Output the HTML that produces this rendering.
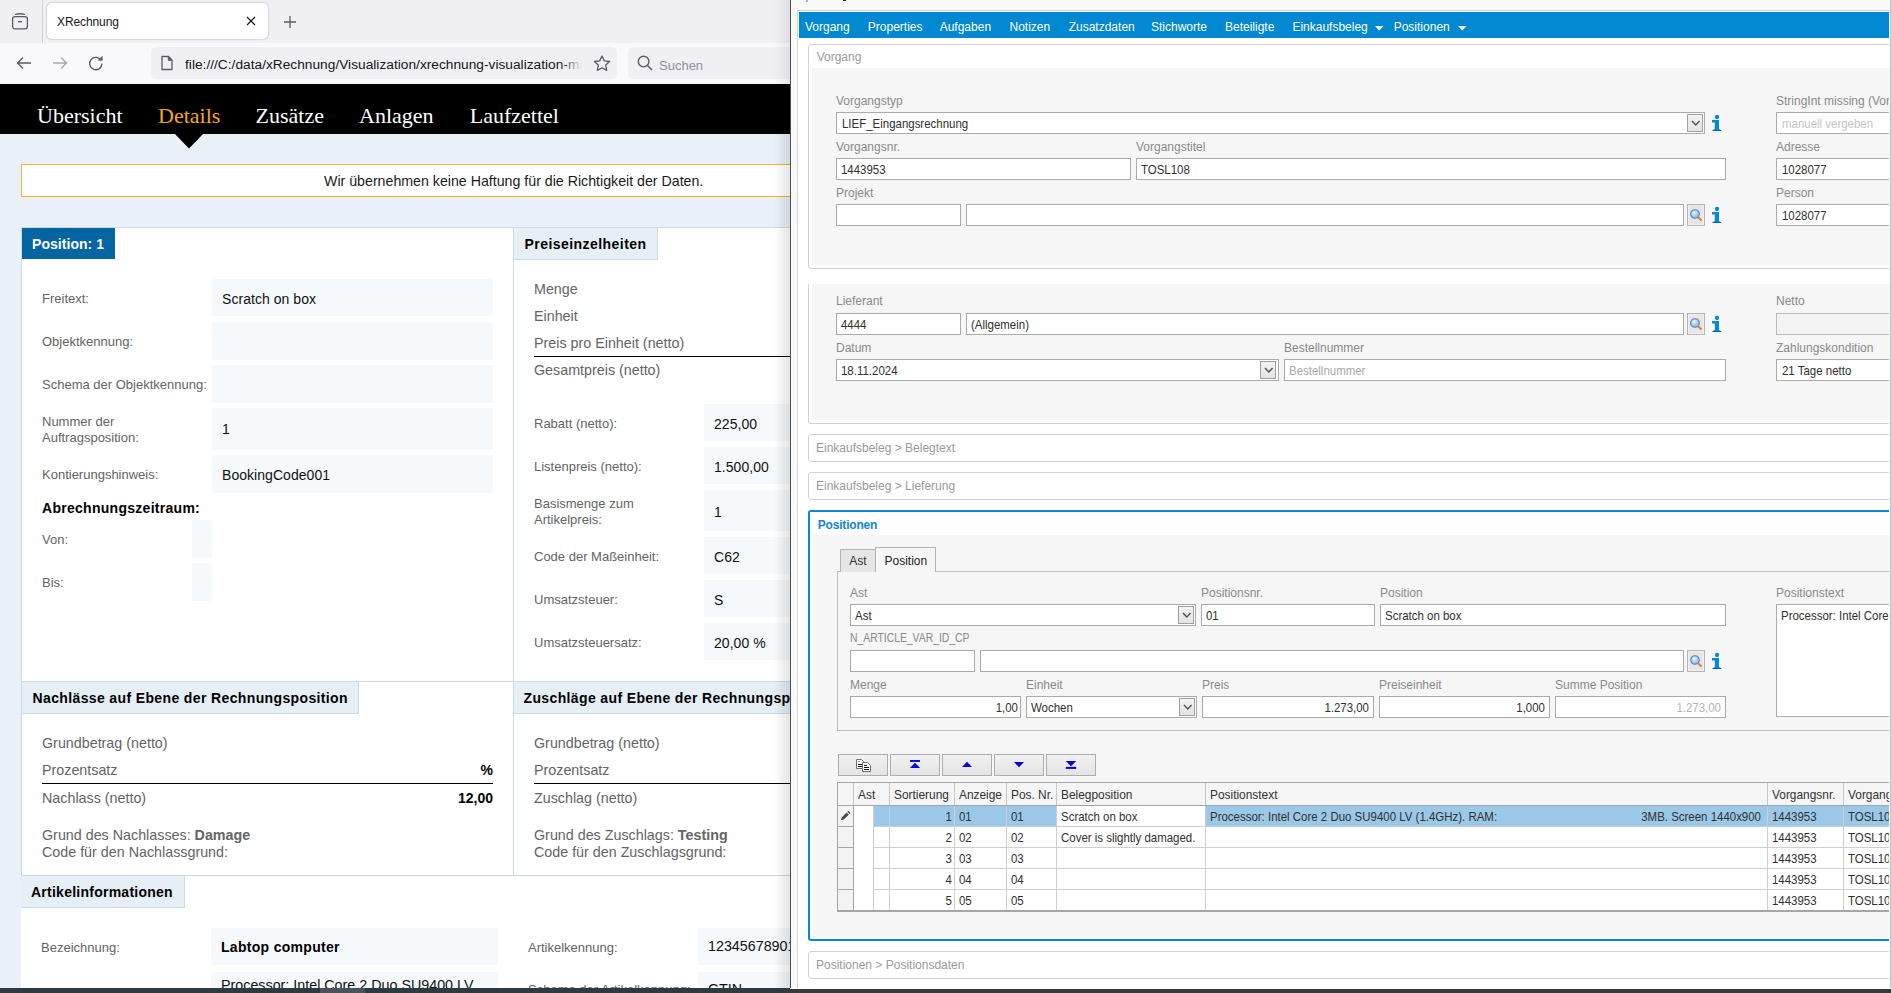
<!DOCTYPE html><html><head><meta charset="utf-8"><style>
html,body{margin:0;padding:0;width:1891px;height:993px;overflow:hidden;background:#fff;font-family:"Liberation Sans",sans-serif}
.a{position:absolute}
.t{white-space:nowrap}
</style></head><body>
<div class="a" style="left:0;top:0;width:790px;height:988px;overflow:hidden">
<div class="a" style="left:0px;top:0px;width:790px;height:43px;background:#f0f0f4"></div>
<div class="a" style="left:42px;top:0px;width:1px;height:43px;background:#cfcfd8"></div>
<div class="a" style="left:47px;top:3px;width:221px;height:36px;background:#fff;border-radius:5px;box-shadow:0 0 2px rgba(0,0,0,.35)"></div>
<div class="a t" style="left:57px;top:14.64px;font-size:12px;line-height:14.4px;color:#15141a;font-family:'Liberation Sans',sans-serif;letter-spacing:-0.1px">XRechnung</div>
<svg class="a" style="left:10px;top:11px" width="20" height="20" viewBox="0 0 20 20"><rect x="2.6" y="5.6" width="14.8" height="12.2" rx="2.5" fill="none" stroke="#5b5b66" stroke-width="1.3"/><path d="M5 3.5 Q10 2 15 3.5" fill="none" stroke="#5b5b66" stroke-width="1.3"/><rect x="8" y="10" width="4" height="1.4" fill="#5b5b66"/></svg>
<svg class="a" style="left:245px;top:15px" width="12" height="12" viewBox="0 0 12 12"><path d="M2 2L10 10M10 2L2 10" stroke="#15141a" stroke-width="1.2"/></svg>
<svg class="a" style="left:283px;top:15px" width="14" height="14" viewBox="0 0 14 14"><path d="M7 1V13M1 7H13" stroke="#5b5b66" stroke-width="1.3"/></svg>
<div class="a" style="left:0px;top:43px;width:790px;height:41px;background:#f9f9fb"></div>
<svg class="a" style="left:15px;top:55px" width="18" height="16" viewBox="0 0 18 16"><path d="M2.5 8H16M8 2.5L2.5 8L8 13.5" fill="none" stroke="#5b5b66" stroke-width="1.4"/></svg>
<svg class="a" style="left:51px;top:55px" width="18" height="16" viewBox="0 0 18 16"><path d="M15.5 8H2M10 2.5L15.5 8L10 13.5" fill="none" stroke="#a5a5ac" stroke-width="1.4"/></svg>
<svg class="a" style="left:87px;top:54px" width="18" height="18" viewBox="0 0 18 18"><path d="M14.2 6.5A6.2 6.2 0 1 0 15 9.5" fill="none" stroke="#5b5b66" stroke-width="1.4"/><path d="M10.5 6.5L15.6 6.5L15.6 1.8Z" fill="#5b5b66"/></svg>
<div class="a" style="left:151px;top:47px;width:466px;height:32px;background:#f0f0f4;border-radius:5px"></div>
<svg class="a" style="left:159px;top:54px" width="16" height="18" viewBox="0 0 16 18"><path d="M3 2.5H9.5L13 6V15.5H3Z" fill="none" stroke="#5b5b66" stroke-width="1.3" stroke-linejoin="round"/><path d="M9.3 2.5V6.3H13" fill="#5b5b66" stroke="#5b5b66" stroke-width="1"/></svg>
<div class="a t" style="left:185px;top:57.03px;font-size:13.7px;line-height:16.44px;color:#15141a;font-family:'Liberation Sans',sans-serif;letter-spacing:0.02px;white-space:nowrap;width:400px;overflow:hidden">file:///C:/data/xRechnung/Visualization/xrechnung-visualization-ma</div>
<div class="a" style="left:560px;top:48px;width:28px;height:30px;background:linear-gradient(90deg,rgba(240,240,244,0),#f0f0f4 80%)"></div>
<svg class="a" style="left:592px;top:54px" width="20" height="19" viewBox="0 0 20 19"><path d="M10 2L12.3 6.9L17.6 7.5L13.7 11.1L14.7 16.4L10 13.8L5.3 16.4L6.3 11.1L2.4 7.5L7.7 6.9Z" fill="none" stroke="#5b5b66" stroke-width="1.3" stroke-linejoin="round"/></svg>
<div class="a" style="left:628px;top:47px;width:170px;height:32px;background:#f0f0f4;border-radius:5px"></div>
<svg class="a" style="left:636px;top:54px" width="18" height="18" viewBox="0 0 18 18"><circle cx="7.6" cy="7.6" r="5.3" fill="none" stroke="#5b5b66" stroke-width="1.4"/><path d="M11.5 11.5L16 16" stroke="#5b5b66" stroke-width="1.5"/></svg>
<div class="a t" style="left:659px;top:57.70px;font-size:13px;line-height:15.6px;color:#8f8f9d;font-family:'Liberation Sans',sans-serif;">Suchen</div>
<div class="a" style="left:0px;top:84px;width:790px;height:50px;background:#000"></div>
<div class="a" style="left:0px;top:134px;width:790px;height:854px;background:#e9f0f7"></div>
<svg class="a" style="left:174px;top:133px" width="30" height="16" viewBox="0 0 30 16"><path d="M0 0H30L15 15.5Z" fill="#000"/></svg>
<div class="a t" style="left:37px;top:103.08px;font-size:22px;line-height:26.4px;color:#fff;font-family:'Liberation Serif',serif;">Übersicht</div>
<div class="a t" style="left:158px;top:103.08px;font-size:22px;line-height:26.4px;color:#f6a81a;font-family:'Liberation Serif',serif;">Details</div>
<div class="a t" style="left:255.5px;top:103.08px;font-size:22px;line-height:26.4px;color:#fff;font-family:'Liberation Serif',serif;">Zusätze</div>
<div class="a t" style="left:359px;top:103.08px;font-size:22px;line-height:26.4px;color:#fff;font-family:'Liberation Serif',serif;">Anlagen</div>
<div class="a t" style="left:469.8px;top:103.08px;font-size:22px;line-height:26.4px;color:#fff;font-family:'Liberation Serif',serif;">Laufzettel</div>
<div class="a" style="left:21px;top:164px;width:1000px;height:31px;background:#fff;border:1px solid #f9b22f"></div>
<div class="a t" style="left:324px;top:172.56px;font-size:14.2px;line-height:17.04px;color:#1a1a1a;font-family:'Liberation Sans',sans-serif;white-space:nowrap">Wir übernehmen keine Haftung für die Richtigkeit der Daten.</div>
<div class="a" style="left:21px;top:227px;width:1000px;height:648px;background:#fff;border-top:1px solid #c8dbea;border-left:1px solid #c8dbea"></div>
<div class="a" style="left:513px;top:227px;width:1px;height:648px;background:#c8dbea"></div>
<div class="a" style="left:21px;top:681px;width:1000px;height:1px;background:#c8dbea"></div>
<div class="a" style="left:21px;top:875px;width:1000px;height:1px;background:#c8dbea"></div>
<div class="a" style="left:21px;top:876px;width:1000px;height:120px;background:#fff"></div>
<div class="a" style="left:22px;top:228px;width:93px;height:31px;background:#0565a2"></div>
<div class="a t" style="left:32px;top:235.75px;font-size:14px;line-height:16.8px;color:#fff;font-family:'Liberation Sans',sans-serif;font-weight:bold;letter-spacing:0.05px">Position: 1</div>
<div class="a" style="left:514px;top:228px;width:143px;height:31px;background:#e6eef6;border-right:1px solid #c8dbea;border-bottom:1px solid #c8dbea"></div>
<div class="a t" style="left:524.5px;top:235.75px;font-size:14px;line-height:16.8px;color:#000;font-family:'Liberation Sans',sans-serif;font-weight:bold;letter-spacing:0.45px">Preiseinzelheiten</div>
<div class="a" style="left:22px;top:682px;width:336px;height:31px;background:#e6eef6;border-right:1px solid #c8dbea;border-bottom:1px solid #c8dbea"></div>
<div class="a t" style="left:32.5px;top:689.75px;font-size:14px;line-height:16.8px;color:#000;font-family:'Liberation Sans',sans-serif;font-weight:bold;letter-spacing:0.37px;white-space:nowrap">Nachlässe auf Ebene der Rechnungsposition</div>
<div class="a" style="left:514px;top:682px;width:400px;height:31px;background:#e6eef6;border-bottom:1px solid #c8dbea"></div>
<div class="a t" style="left:523.5px;top:689.75px;font-size:14px;line-height:16.8px;color:#000;font-family:'Liberation Sans',sans-serif;font-weight:bold;letter-spacing:0.37px;white-space:nowrap">Zuschläge auf Ebene der Rechnungsposition</div>
<div class="a" style="left:21px;top:876px;width:163px;height:31px;background:#e6eef6;border-right:1px solid #c8dbea;border-bottom:1px solid #c8dbea"></div>
<div class="a t" style="left:31px;top:883.75px;font-size:14px;line-height:16.8px;color:#000;font-family:'Liberation Sans',sans-serif;font-weight:bold;letter-spacing:0.25px">Artikelinformationen</div>
<div class="a" style="left:212px;top:279px;width:281px;height:37px;background:#f5f9fc"></div>
<div class="a t" style="left:42px;top:290.70px;font-size:13px;line-height:15.6px;color:#646464;font-family:'Liberation Sans',sans-serif;white-space:nowrap">Freitext:</div>
<div class="a t" style="left:222px;top:290.55px;font-size:14px;line-height:16.8px;color:#111;font-family:'Liberation Sans',sans-serif;letter-spacing:0.05px">Scratch on box</div>
<div class="a" style="left:212px;top:322px;width:281px;height:38px;background:#f5f9fc"></div>
<div class="a t" style="left:42px;top:333.70px;font-size:13px;line-height:15.6px;color:#646464;font-family:'Liberation Sans',sans-serif;white-space:nowrap">Objektkennung:</div>
<div class="a" style="left:212px;top:365px;width:281px;height:38px;background:#f5f9fc"></div>
<div class="a t" style="left:42px;top:376.70px;font-size:13px;line-height:15.6px;color:#646464;font-family:'Liberation Sans',sans-serif;white-space:nowrap">Schema der Objektkennung:</div>
<div class="a" style="left:212px;top:408px;width:281px;height:42px;background:#f5f9fc"></div>
<div class="a t" style="left:42px;top:414.20px;font-size:13px;line-height:15.6px;color:#646464;font-family:'Liberation Sans',sans-serif;white-space:nowrap">Nummer der</div>
<div class="a t" style="left:42px;top:430.20px;font-size:13px;line-height:15.6px;color:#646464;font-family:'Liberation Sans',sans-serif;white-space:nowrap">Auftragsposition:</div>
<div class="a t" style="left:222px;top:420.85px;font-size:14px;line-height:16.8px;color:#111;font-family:'Liberation Sans',sans-serif;letter-spacing:0.05px">1</div>
<div class="a" style="left:212px;top:455px;width:281px;height:38px;background:#f5f9fc"></div>
<div class="a t" style="left:42px;top:467.20px;font-size:13px;line-height:15.6px;color:#646464;font-family:'Liberation Sans',sans-serif;white-space:nowrap">Kontierungshinweis:</div>
<div class="a t" style="left:222px;top:467.05px;font-size:14px;line-height:16.8px;color:#111;font-family:'Liberation Sans',sans-serif;letter-spacing:0.05px">BookingCode001</div>
<div class="a t" style="left:42px;top:499.75px;font-size:14px;line-height:16.8px;color:#000;font-family:'Liberation Sans',sans-serif;font-weight:bold;letter-spacing:0.28px">Abrechnungszeitraum:</div>
<div class="a" style="left:192px;top:520px;width:20px;height:38px;background:#f5f9fc"></div>
<div class="a t" style="left:42px;top:532.20px;font-size:13px;line-height:15.6px;color:#646464;font-family:'Liberation Sans',sans-serif;">Von:</div>
<div class="a" style="left:192px;top:563px;width:20px;height:38px;background:#f5f9fc"></div>
<div class="a t" style="left:42px;top:575.40px;font-size:13px;line-height:15.6px;color:#646464;font-family:'Liberation Sans',sans-serif;">Bis:</div>
<div class="a t" style="left:534px;top:280.67px;font-size:14.3px;line-height:17.16px;color:#646464;font-family:'Liberation Sans',sans-serif;">Menge</div>
<div class="a t" style="left:534px;top:307.97px;font-size:14.3px;line-height:17.16px;color:#646464;font-family:'Liberation Sans',sans-serif;">Einheit</div>
<div class="a t" style="left:534px;top:334.67px;font-size:14.3px;line-height:17.16px;color:#646464;font-family:'Liberation Sans',sans-serif;">Preis pro Einheit (netto)</div>
<div class="a" style="left:534px;top:356px;width:300px;height:1px;background:#000"></div>
<div class="a t" style="left:534px;top:362.37px;font-size:14.3px;line-height:17.16px;color:#646464;font-family:'Liberation Sans',sans-serif;">Gesamtpreis (netto)</div>
<div class="a" style="left:704px;top:404px;width:200px;height:37px;background:#f5f9fc"></div>
<div class="a t" style="left:534px;top:415.70px;font-size:13px;line-height:15.6px;color:#646464;font-family:'Liberation Sans',sans-serif;white-space:nowrap">Rabatt (netto):</div>
<div class="a t" style="left:714px;top:415.55px;font-size:14px;line-height:16.8px;color:#111;font-family:'Liberation Sans',sans-serif;letter-spacing:0.05px">225,00</div>
<div class="a" style="left:704px;top:447px;width:200px;height:37px;background:#f5f9fc"></div>
<div class="a t" style="left:534px;top:458.70px;font-size:13px;line-height:15.6px;color:#646464;font-family:'Liberation Sans',sans-serif;white-space:nowrap">Listenpreis (netto):</div>
<div class="a t" style="left:714px;top:458.55px;font-size:14px;line-height:16.8px;color:#111;font-family:'Liberation Sans',sans-serif;letter-spacing:0.05px">1.500,00</div>
<div class="a" style="left:704px;top:490px;width:200px;height:41px;background:#f5f9fc"></div>
<div class="a t" style="left:534px;top:495.70px;font-size:13px;line-height:15.6px;color:#646464;font-family:'Liberation Sans',sans-serif;white-space:nowrap">Basismenge zum</div>
<div class="a t" style="left:534px;top:511.70px;font-size:13px;line-height:15.6px;color:#646464;font-family:'Liberation Sans',sans-serif;white-space:nowrap">Artikelpreis:</div>
<div class="a t" style="left:714px;top:503.55px;font-size:14px;line-height:16.8px;color:#111;font-family:'Liberation Sans',sans-serif;letter-spacing:0.05px">1</div>
<div class="a" style="left:704px;top:537px;width:200px;height:37px;background:#f5f9fc"></div>
<div class="a t" style="left:534px;top:548.70px;font-size:13px;line-height:15.6px;color:#646464;font-family:'Liberation Sans',sans-serif;white-space:nowrap">Code der Maßeinheit:</div>
<div class="a t" style="left:714px;top:548.55px;font-size:14px;line-height:16.8px;color:#111;font-family:'Liberation Sans',sans-serif;letter-spacing:0.05px">C62</div>
<div class="a" style="left:704px;top:580px;width:200px;height:37px;background:#f5f9fc"></div>
<div class="a t" style="left:534px;top:591.70px;font-size:13px;line-height:15.6px;color:#646464;font-family:'Liberation Sans',sans-serif;white-space:nowrap">Umsatzsteuer:</div>
<div class="a t" style="left:714px;top:591.55px;font-size:14px;line-height:16.8px;color:#111;font-family:'Liberation Sans',sans-serif;letter-spacing:0.05px">S</div>
<div class="a" style="left:704px;top:623px;width:200px;height:37px;background:#f5f9fc"></div>
<div class="a t" style="left:534px;top:634.70px;font-size:13px;line-height:15.6px;color:#646464;font-family:'Liberation Sans',sans-serif;white-space:nowrap">Umsatzsteuersatz:</div>
<div class="a t" style="left:714px;top:634.55px;font-size:14px;line-height:16.8px;color:#111;font-family:'Liberation Sans',sans-serif;letter-spacing:0.05px">20,00 %</div>
<div class="a t" style="left:42px;top:735.17px;font-size:14.3px;line-height:17.16px;color:#646464;font-family:'Liberation Sans',sans-serif;">Grundbetrag (netto)</div>
<div class="a t" style="left:42px;top:762.07px;font-size:14.3px;line-height:17.16px;color:#646464;font-family:'Liberation Sans',sans-serif;">Prozentsatz</div>
<div class="a t" style="left:-107px;width:600px;text-align:right;top:762.05px;font-size:14px;line-height:16.8px;color:#000;font-family:'Liberation Sans',sans-serif;font-weight:bold;">%</div>
<div class="a" style="left:42px;top:783px;width:451px;height:1px;background:#000"></div>
<div class="a t" style="left:42px;top:789.97px;font-size:14.3px;line-height:17.16px;color:#646464;font-family:'Liberation Sans',sans-serif;">Nachlass (netto)</div>
<div class="a t" style="left:-107px;width:600px;text-align:right;top:789.75px;font-size:14px;line-height:16.8px;color:#000;font-family:'Liberation Sans',sans-serif;font-weight:bold;">12,00</div>
<div class="a t" style="left:42px;top:827.17px;font-size:14.3px;line-height:17.16px;color:#646464;font-family:'Liberation Sans',sans-serif;white-space:nowrap">Grund des Nachlasses: <b>Damage</b></div>
<div class="a t" style="left:42px;top:844.17px;font-size:14.3px;line-height:17.16px;color:#646464;font-family:'Liberation Sans',sans-serif;white-space:nowrap">Code für den Nachlassgrund:</div>
<div class="a t" style="left:534px;top:735.17px;font-size:14.3px;line-height:17.16px;color:#646464;font-family:'Liberation Sans',sans-serif;">Grundbetrag (netto)</div>
<div class="a t" style="left:534px;top:762.07px;font-size:14.3px;line-height:17.16px;color:#646464;font-family:'Liberation Sans',sans-serif;">Prozentsatz</div>
<div class="a" style="left:534px;top:783px;width:300px;height:1px;background:#000"></div>
<div class="a t" style="left:534px;top:789.97px;font-size:14.3px;line-height:17.16px;color:#646464;font-family:'Liberation Sans',sans-serif;">Zuschlag (netto)</div>
<div class="a t" style="left:534px;top:827.17px;font-size:14.3px;line-height:17.16px;color:#646464;font-family:'Liberation Sans',sans-serif;white-space:nowrap">Grund des Zuschlags: <b>Testing</b></div>
<div class="a t" style="left:534px;top:844.17px;font-size:14.3px;line-height:17.16px;color:#646464;font-family:'Liberation Sans',sans-serif;white-space:nowrap">Code für den Zuschlagsgrund:</div>
<div class="a" style="left:211px;top:928px;width:287px;height:37px;background:#f5f9fc"></div>
<div class="a" style="left:211px;top:972px;width:287px;height:30px;background:#f5f9fc"></div>
<div class="a t" style="left:41px;top:939.70px;font-size:13px;line-height:15.6px;color:#646464;font-family:'Liberation Sans',sans-serif;">Bezeichnung:</div>
<div class="a t" style="left:221px;top:938.75px;font-size:14px;line-height:16.8px;color:#000;font-family:'Liberation Sans',sans-serif;font-weight:bold;letter-spacing:0.3px">Labtop computer</div>
<div class="a t" style="left:221px;top:977.27px;font-size:14.3px;line-height:17.16px;color:#111;font-family:'Liberation Sans',sans-serif;white-space:nowrap">Processor: Intel Core 2 Duo SU9400 LV</div>
<div class="a t" style="left:528px;top:939.70px;font-size:13px;line-height:15.6px;color:#646464;font-family:'Liberation Sans',sans-serif;">Artikelkennung:</div>
<div class="a" style="left:698px;top:928px;width:200px;height:37px;background:#f5f9fc"></div>
<div class="a" style="left:698px;top:972px;width:200px;height:30px;background:#f5f9fc"></div>
<div class="a t" style="left:708px;top:938.47px;font-size:14.3px;line-height:17.16px;color:#111;font-family:'Liberation Sans',sans-serif;">1234567890123</div>
<div class="a t" style="left:528px;top:981.70px;font-size:13px;line-height:15.6px;color:#646464;font-family:'Liberation Sans',sans-serif;white-space:nowrap">Schema der Artikelkennung:</div>
<div class="a t" style="left:708px;top:981.47px;font-size:14.3px;line-height:17.16px;color:#111;font-family:'Liberation Sans',sans-serif;">GTIN</div>
<div class="a" style="left:774px;top:84px;width:16px;height:904px;background:linear-gradient(90deg,rgba(0,0,0,0),rgba(0,0,0,0.11))"></div>
<div class="a" style="left:774px;top:0px;width:16px;height:84px;background:linear-gradient(90deg,rgba(0,0,0,0),rgba(0,0,0,0.07))"></div>
</div>
<div class="a" style="left:790px;top:0;width:1101px;height:988px;overflow:hidden;background:#f9f9f9">
</div>
<div class="a" style="left:790px;top:0;width:1px;height:988px;background:#505050"></div>
<div class="a" style="left:1890px;top:0;width:1px;height:988px;background:#c4c4c4"></div>
<div class="a" style="left:0;top:0;width:1889px;height:988px;overflow:hidden">
<div class="a" style="left:806px;top:0px;width:2px;height:2px;background:#7cc4e4"></div>
<div class="a" style="left:843px;top:0px;width:3px;height:1px;background:#222"></div>
<div class="a" style="left:797px;top:10px;width:1200px;height:990px;background:#fff;border:1px solid #d6d6d6;box-sizing:border-box"></div>
<div class="a" style="left:799px;top:12px;width:1100px;height:26px;background:#0288d1"></div>
<div class="a t" style="left:805px;top:20.34px;font-size:12px;line-height:14.4px;color:#fff;font-family:'Liberation Sans',sans-serif;white-space:nowrap;">Vorgang</div>
<div class="a t" style="left:867.8px;top:20.34px;font-size:12px;line-height:14.4px;color:#fff;font-family:'Liberation Sans',sans-serif;white-space:nowrap;">Properties</div>
<div class="a t" style="left:939.7px;top:20.34px;font-size:12px;line-height:14.4px;color:#fff;font-family:'Liberation Sans',sans-serif;white-space:nowrap;">Aufgaben</div>
<div class="a t" style="left:1009.5px;top:20.34px;font-size:12px;line-height:14.4px;color:#fff;font-family:'Liberation Sans',sans-serif;white-space:nowrap;">Notizen</div>
<div class="a t" style="left:1068.7px;top:20.34px;font-size:12px;line-height:14.4px;color:#fff;font-family:'Liberation Sans',sans-serif;white-space:nowrap;">Zusatzdaten</div>
<div class="a t" style="left:1151px;top:20.34px;font-size:12px;line-height:14.4px;color:#fff;font-family:'Liberation Sans',sans-serif;white-space:nowrap;">Stichworte</div>
<div class="a t" style="left:1225px;top:20.34px;font-size:12px;line-height:14.4px;color:#fff;font-family:'Liberation Sans',sans-serif;white-space:nowrap;">Beteiligte</div>
<div class="a t" style="left:1292.4px;top:20.34px;font-size:12px;line-height:14.4px;color:#fff;font-family:'Liberation Sans',sans-serif;white-space:nowrap;">Einkaufsbeleg</div>
<div class="a t" style="left:1393.7px;top:20.34px;font-size:12px;line-height:14.4px;color:#fff;font-family:'Liberation Sans',sans-serif;white-space:nowrap;">Positionen</div>
<svg class="a" style="left:1375px;top:26px" width="9" height="5" viewBox="0 0 9 5"><path d="M0 0H8.5L4.25 4.5Z" fill="#fff"/></svg>
<svg class="a" style="left:1458px;top:26px" width="9" height="5" viewBox="0 0 9 5"><path d="M0 0H8.5L4.25 4.5Z" fill="#fff"/></svg>
<div class="a" style="left:808px;top:44px;width:1200px;height:225px;background:#fff;border:1px solid #d2d2d2;border-radius:3px;box-sizing:border-box;"></div>
<div class="a t" style="left:816.7px;top:50.44px;font-size:12px;line-height:14.4px;color:#9a9a9a;font-family:'Liberation Sans',sans-serif;white-space:nowrap;">Vorgang</div>
<div class="a" style="left:812px;top:68px;width:1100px;height:197px;background:#f6f6f6"></div>
<div class="a t" style="left:836px;top:93.64px;font-size:12px;line-height:14.4px;color:#8a8a8a;font-family:'Liberation Sans',sans-serif;white-space:nowrap;">Vorgangstyp</div>
<div class="a" style="left:836px;top:112px;width:869px;height:22px;background:#fff;border:1px solid #ababab;box-sizing:border-box"></div>
<div class="a" style="left:1687px;top:114px;width:16px;height:18px;box-sizing:border-box;border:1px solid #a0a0a0;background:linear-gradient(#f3f3f3,#e3e3e3)"><svg style="position:absolute;left:3px;top:5px" width="10" height="7" viewBox="0 0 10 7"><path d="M1 1L4.8 5L8.6 1" fill="none" stroke="#555" stroke-width="1.5"/></svg></div>
<div class="a t" style="left:841.5px;top:116.76px;font-size:12.4px;line-height:14.88px;color:#303030;font-family:'Liberation Sans',sans-serif;transform:scaleX(0.925);transform-origin:left center;white-space:nowrap;">LIEF_Eingangsrechnung</div>
<svg class="a" style="left:1711px;top:114px" width="12" height="18" viewBox="0 0 12 18"><circle cx="6.05" cy="3" r="2.15" fill="#0788d2"/><path d="M1 6H8V15L10.2 16.3V17H1.6V16.3L3.8 15V8.4H1Z" fill="#0788d2"/><path d="M1.6 16.2H10.2V17H1.6Z" fill="#0a5e9e"/></svg>
<div class="a t" style="left:1776px;top:93.64px;font-size:12px;line-height:14.4px;color:#8a8a8a;font-family:'Liberation Sans',sans-serif;white-space:nowrap;">StringInt missing (Vorgangsnr.)</div>
<div class="a" style="left:1776px;top:112px;width:300px;height:22px;background:#fff;border:1px solid #ababab;box-sizing:border-box"></div>
<div class="a t" style="left:1782px;top:117.16px;font-size:12.4px;line-height:14.88px;color:#c6c6c6;font-family:'Liberation Sans',sans-serif;transform:scaleX(0.925);transform-origin:left center;white-space:nowrap;">manuell vergeben</div>
<div class="a t" style="left:836px;top:139.64px;font-size:12px;line-height:14.4px;color:#8a8a8a;font-family:'Liberation Sans',sans-serif;white-space:nowrap;">Vorgangsnr.</div>
<div class="a" style="left:836px;top:158px;width:295px;height:22px;background:#fff;border:1px solid #ababab;box-sizing:border-box"></div>
<div class="a t" style="left:841px;top:162.76px;font-size:12.4px;line-height:14.88px;color:#303030;font-family:'Liberation Sans',sans-serif;transform:scaleX(0.925);transform-origin:left center;white-space:nowrap;">1443953</div>
<div class="a t" style="left:1136px;top:139.64px;font-size:12px;line-height:14.4px;color:#8a8a8a;font-family:'Liberation Sans',sans-serif;white-space:nowrap;">Vorgangstitel</div>
<div class="a" style="left:1136px;top:158px;width:590px;height:22px;background:#fff;border:1px solid #ababab;box-sizing:border-box"></div>
<div class="a t" style="left:1141px;top:162.76px;font-size:12.4px;line-height:14.88px;color:#303030;font-family:'Liberation Sans',sans-serif;transform:scaleX(0.925);transform-origin:left center;white-space:nowrap;">TOSL108</div>
<div class="a t" style="left:1776px;top:139.94px;font-size:12px;line-height:14.4px;color:#8a8a8a;font-family:'Liberation Sans',sans-serif;white-space:nowrap;">Adresse</div>
<div class="a" style="left:1776px;top:158px;width:300px;height:22px;background:#fff;border:1px solid #ababab;box-sizing:border-box"></div>
<div class="a t" style="left:1782px;top:162.76px;font-size:12.4px;line-height:14.88px;color:#303030;font-family:'Liberation Sans',sans-serif;transform:scaleX(0.925);transform-origin:left center;white-space:nowrap;">1028077</div>
<div class="a t" style="left:836px;top:185.64px;font-size:12px;line-height:14.4px;color:#8a8a8a;font-family:'Liberation Sans',sans-serif;white-space:nowrap;">Projekt</div>
<div class="a" style="left:836px;top:204px;width:125px;height:22px;background:#fff;border:1px solid #ababab;box-sizing:border-box"></div>
<div class="a" style="left:966px;top:204px;width:718px;height:22px;background:#fff;border:1px solid #ababab;box-sizing:border-box"></div>
<div class="a" style="left:1687px;top:204px;width:18px;height:22px;box-sizing:border-box;border:1px solid #b5b5b5;background:#e6e6e6;box-shadow:inset 0 0 0 1px #f0f0f0"><svg style="position:absolute;left:0px;top:2px" width="16" height="16" viewBox="0 0 16 16"><defs><radialGradient id="lg" cx="0.4" cy="0.35" r="0.7"><stop offset="0" stop-color="#eef6ff"/><stop offset="0.5" stop-color="#a9d2f3"/><stop offset="1" stop-color="#7fb2e6"/></radialGradient></defs><circle cx="7" cy="7" r="4.3" fill="url(#lg)" stroke="#5f7cc4" stroke-width="1.1"/><path d="M10.4 10.5L13 12.9" stroke="#cf8640" stroke-width="2.1" stroke-linecap="round"/></svg></div>
<svg class="a" style="left:1711px;top:206px" width="12" height="18" viewBox="0 0 12 18"><circle cx="6.05" cy="3" r="2.15" fill="#0788d2"/><path d="M1 6H8V15L10.2 16.3V17H1.6V16.3L3.8 15V8.4H1Z" fill="#0788d2"/><path d="M1.6 16.2H10.2V17H1.6Z" fill="#0a5e9e"/></svg>
<div class="a t" style="left:1776px;top:186.14px;font-size:12px;line-height:14.4px;color:#8a8a8a;font-family:'Liberation Sans',sans-serif;white-space:nowrap;">Person</div>
<div class="a" style="left:1776px;top:204px;width:300px;height:22px;background:#fff;border:1px solid #ababab;box-sizing:border-box"></div>
<div class="a t" style="left:1782px;top:208.76px;font-size:12.4px;line-height:14.88px;color:#303030;font-family:'Liberation Sans',sans-serif;transform:scaleX(0.925);transform-origin:left center;white-space:nowrap;">1028077</div>
<div class="a" style="left:808px;top:284px;width:1200px;height:140px;background:#fff;border:1px solid #d2d2d2;border-top:none;border-radius:0 0 3px 3px;box-sizing:border-box"></div>
<div class="a" style="left:812px;top:284px;width:1100px;height:136px;background:#f6f6f6"></div>
<div class="a t" style="left:836px;top:294.34px;font-size:12px;line-height:14.4px;color:#8a8a8a;font-family:'Liberation Sans',sans-serif;white-space:nowrap;">Lieferant</div>
<div class="a" style="left:836px;top:313px;width:125px;height:22px;background:#fff;border:1px solid #ababab;box-sizing:border-box"></div>
<div class="a t" style="left:841px;top:317.76px;font-size:12.4px;line-height:14.88px;color:#303030;font-family:'Liberation Sans',sans-serif;transform:scaleX(0.925);transform-origin:left center;white-space:nowrap;">4444</div>
<div class="a" style="left:966px;top:313px;width:718px;height:22px;background:#fff;border:1px solid #ababab;box-sizing:border-box"></div>
<div class="a t" style="left:971px;top:317.76px;font-size:12.4px;line-height:14.88px;color:#303030;font-family:'Liberation Sans',sans-serif;transform:scaleX(0.925);transform-origin:left center;white-space:nowrap;">(Allgemein)</div>
<div class="a" style="left:1687px;top:313px;width:18px;height:22px;box-sizing:border-box;border:1px solid #b5b5b5;background:#e6e6e6;box-shadow:inset 0 0 0 1px #f0f0f0"><svg style="position:absolute;left:0px;top:2px" width="16" height="16" viewBox="0 0 16 16"><defs><radialGradient id="lg" cx="0.4" cy="0.35" r="0.7"><stop offset="0" stop-color="#eef6ff"/><stop offset="0.5" stop-color="#a9d2f3"/><stop offset="1" stop-color="#7fb2e6"/></radialGradient></defs><circle cx="7" cy="7" r="4.3" fill="url(#lg)" stroke="#5f7cc4" stroke-width="1.1"/><path d="M10.4 10.5L13 12.9" stroke="#cf8640" stroke-width="2.1" stroke-linecap="round"/></svg></div>
<svg class="a" style="left:1711px;top:315px" width="12" height="18" viewBox="0 0 12 18"><circle cx="6.05" cy="3" r="2.15" fill="#0788d2"/><path d="M1 6H8V15L10.2 16.3V17H1.6V16.3L3.8 15V8.4H1Z" fill="#0788d2"/><path d="M1.6 16.2H10.2V17H1.6Z" fill="#0a5e9e"/></svg>
<div class="a t" style="left:1776px;top:294.04px;font-size:12px;line-height:14.4px;color:#8a8a8a;font-family:'Liberation Sans',sans-serif;white-space:nowrap;">Netto</div>
<div class="a" style="left:1776px;top:313px;width:300px;height:22px;background:#f3f3f3;border:1px solid #b9b9b9;box-sizing:border-box"></div>
<div class="a t" style="left:836px;top:340.64px;font-size:12px;line-height:14.4px;color:#8a8a8a;font-family:'Liberation Sans',sans-serif;white-space:nowrap;">Datum</div>
<div class="a" style="left:836px;top:359px;width:443px;height:22px;background:#fff;border:1px solid #ababab;box-sizing:border-box"></div>
<div class="a" style="left:1260px;top:361px;width:16px;height:18px;box-sizing:border-box;border:1px solid #a0a0a0;background:linear-gradient(#f3f3f3,#e3e3e3)"><svg style="position:absolute;left:3px;top:5px" width="10" height="7" viewBox="0 0 10 7"><path d="M1 1L4.8 5L8.6 1" fill="none" stroke="#555" stroke-width="1.5"/></svg></div>
<div class="a t" style="left:841px;top:363.76px;font-size:12.4px;line-height:14.88px;color:#303030;font-family:'Liberation Sans',sans-serif;transform:scaleX(0.925);transform-origin:left center;white-space:nowrap;">18.11.2024</div>
<div class="a t" style="left:1284px;top:340.64px;font-size:12px;line-height:14.4px;color:#8a8a8a;font-family:'Liberation Sans',sans-serif;white-space:nowrap;">Bestellnummer</div>
<div class="a" style="left:1284px;top:359px;width:442px;height:22px;background:#fff;border:1px solid #ababab;box-sizing:border-box"></div>
<div class="a t" style="left:1289px;top:363.76px;font-size:12.4px;line-height:14.88px;color:#a8a8a8;font-family:'Liberation Sans',sans-serif;transform:scaleX(0.925);transform-origin:left center;white-space:nowrap;">Bestellnummer</div>
<div class="a t" style="left:1776px;top:340.64px;font-size:12px;line-height:14.4px;color:#8a8a8a;font-family:'Liberation Sans',sans-serif;white-space:nowrap;">Zahlungskondition</div>
<div class="a" style="left:1776px;top:359px;width:300px;height:22px;background:#fff;border:1px solid #ababab;box-sizing:border-box"></div>
<div class="a t" style="left:1782px;top:363.76px;font-size:12.4px;line-height:14.88px;color:#303030;font-family:'Liberation Sans',sans-serif;transform:scaleX(0.925);transform-origin:left center;white-space:nowrap;">21 Tage netto</div>
<div class="a" style="left:808px;top:434px;width:1200px;height:28px;background:#fff;border:1px solid #d2d2d2;border-radius:3px;box-sizing:border-box;"></div>
<div class="a t" style="left:816px;top:441.04px;font-size:12px;line-height:14.4px;color:#9a9a9a;font-family:'Liberation Sans',sans-serif;white-space:nowrap;">Einkaufsbeleg &gt; Belegtext</div>
<div class="a" style="left:808px;top:472px;width:1200px;height:28px;background:#fff;border:1px solid #d2d2d2;border-radius:3px;box-sizing:border-box;"></div>
<div class="a t" style="left:816px;top:478.64px;font-size:12px;line-height:14.4px;color:#9a9a9a;font-family:'Liberation Sans',sans-serif;white-space:nowrap;">Einkaufsbeleg &gt; Lieferung</div>
<div class="a" style="left:808px;top:510px;width:1200px;height:431px;background:#fff;border:2px solid #0a88d4;border-radius:3px;box-sizing:border-box"></div>
<div class="a t" style="left:817.8px;top:517.64px;font-size:12px;line-height:14.4px;color:#1286d2;font-family:'Liberation Sans',sans-serif;white-space:nowrap;font-weight:bold;letter-spacing:-0.2px">Positionen</div>
<div class="a" style="left:813px;top:535px;width:1100px;height:403px;background:#f6f6f6"></div>
<div class="a" style="left:837px;top:571px;width:1100px;height:160px;border:1px solid #bdbdbd;box-sizing:border-box;background:#f6f6f6"></div>
<div class="a" style="left:840px;top:549px;width:36px;height:23px;background:#e6e6e6;border:1px solid #b4b4b4;border-bottom:none;box-sizing:border-box"></div>
<div class="a t" style="left:849.3px;top:553.84px;font-size:12px;line-height:14.4px;color:#333;font-family:'Liberation Sans',sans-serif;white-space:nowrap;">Ast</div>
<div class="a" style="left:875px;top:547px;width:61px;height:25px;background:#f6f6f6;border:1px solid #b4b4b4;border-bottom:none;box-sizing:border-box"></div>
<div class="a t" style="left:884.5px;top:553.84px;font-size:12px;line-height:14.4px;color:#222;font-family:'Liberation Sans',sans-serif;white-space:nowrap;">Position</div>
<div class="a t" style="left:850px;top:585.64px;font-size:12px;line-height:14.4px;color:#8a8a8a;font-family:'Liberation Sans',sans-serif;white-space:nowrap;">Ast</div>
<div class="a" style="left:850px;top:604px;width:346px;height:22px;background:#fff;border:1px solid #ababab;box-sizing:border-box"></div>
<div class="a" style="left:1178px;top:606px;width:16px;height:18px;box-sizing:border-box;border:1px solid #a0a0a0;background:linear-gradient(#f3f3f3,#e3e3e3)"><svg style="position:absolute;left:3px;top:5px" width="10" height="7" viewBox="0 0 10 7"><path d="M1 1L4.8 5L8.6 1" fill="none" stroke="#555" stroke-width="1.5"/></svg></div>
<div class="a t" style="left:855px;top:608.76px;font-size:12.4px;line-height:14.88px;color:#303030;font-family:'Liberation Sans',sans-serif;transform:scaleX(0.925);transform-origin:left center;white-space:nowrap;">Ast</div>
<div class="a t" style="left:1201px;top:586.04px;font-size:12px;line-height:14.4px;color:#8a8a8a;font-family:'Liberation Sans',sans-serif;white-space:nowrap;">Positionsnr.</div>
<div class="a" style="left:1201px;top:604px;width:174px;height:22px;background:#fff;border:1px solid #ababab;box-sizing:border-box"></div>
<div class="a t" style="left:1206px;top:608.76px;font-size:12.4px;line-height:14.88px;color:#303030;font-family:'Liberation Sans',sans-serif;transform:scaleX(0.925);transform-origin:left center;white-space:nowrap;">01</div>
<div class="a t" style="left:1380px;top:586.04px;font-size:12px;line-height:14.4px;color:#8a8a8a;font-family:'Liberation Sans',sans-serif;white-space:nowrap;">Position</div>
<div class="a" style="left:1380px;top:604px;width:346px;height:22px;background:#fff;border:1px solid #ababab;box-sizing:border-box"></div>
<div class="a t" style="left:1385px;top:608.76px;font-size:12.4px;line-height:14.88px;color:#303030;font-family:'Liberation Sans',sans-serif;transform:scaleX(0.925);transform-origin:left center;white-space:nowrap;">Scratch on box</div>
<div class="a t" style="left:1776px;top:586.04px;font-size:12px;line-height:14.4px;color:#8a8a8a;font-family:'Liberation Sans',sans-serif;white-space:nowrap;">Positionstext</div>
<div class="a" style="left:1776px;top:604px;width:300px;height:113px;background:#fff;border:1px solid #ababab;box-sizing:border-box"></div>
<div class="a t" style="left:1781px;top:609.16px;font-size:12.4px;line-height:14.88px;color:#303030;font-family:'Liberation Sans',sans-serif;transform:scaleX(0.925);transform-origin:left center;white-space:nowrap;">Processor: Intel Core 2 Duo SU9400 LV</div>
<div class="a t" style="left:850px;top:631.44px;font-size:12px;line-height:14.4px;color:#8a8a8a;font-family:'Liberation Sans',sans-serif;transform:scaleX(0.864);transform-origin:left center;white-space:nowrap;">N_ARTICLE_VAR_ID_CP</div>
<div class="a" style="left:850px;top:650px;width:125px;height:22px;background:#fff;border:1px solid #ababab;box-sizing:border-box"></div>
<div class="a" style="left:980px;top:650px;width:704px;height:22px;background:#fff;border:1px solid #ababab;box-sizing:border-box"></div>
<div class="a" style="left:1687px;top:650px;width:18px;height:22px;box-sizing:border-box;border:1px solid #b5b5b5;background:#e6e6e6;box-shadow:inset 0 0 0 1px #f0f0f0"><svg style="position:absolute;left:0px;top:2px" width="16" height="16" viewBox="0 0 16 16"><defs><radialGradient id="lg" cx="0.4" cy="0.35" r="0.7"><stop offset="0" stop-color="#eef6ff"/><stop offset="0.5" stop-color="#a9d2f3"/><stop offset="1" stop-color="#7fb2e6"/></radialGradient></defs><circle cx="7" cy="7" r="4.3" fill="url(#lg)" stroke="#5f7cc4" stroke-width="1.1"/><path d="M10.4 10.5L13 12.9" stroke="#cf8640" stroke-width="2.1" stroke-linecap="round"/></svg></div>
<svg class="a" style="left:1711px;top:652px" width="12" height="18" viewBox="0 0 12 18"><circle cx="6.05" cy="3" r="2.15" fill="#0788d2"/><path d="M1 6H8V15L10.2 16.3V17H1.6V16.3L3.8 15V8.4H1Z" fill="#0788d2"/><path d="M1.6 16.2H10.2V17H1.6Z" fill="#0a5e9e"/></svg>
<div class="a t" style="left:850px;top:677.84px;font-size:12px;line-height:14.4px;color:#8a8a8a;font-family:'Liberation Sans',sans-serif;white-space:nowrap;">Menge</div>
<div class="a" style="left:850px;top:696px;width:171px;height:22px;background:#fff;border:1px solid #ababab;box-sizing:border-box"></div>
<div class="a t" style="left:418px;width:600px;text-align:right;top:700.76px;font-size:12.4px;line-height:14.88px;color:#303030;font-family:'Liberation Sans',sans-serif;transform:scaleX(0.925);transform-origin:right center;">1,00</div>
<div class="a t" style="left:1026px;top:677.84px;font-size:12px;line-height:14.4px;color:#8a8a8a;font-family:'Liberation Sans',sans-serif;white-space:nowrap;">Einheit</div>
<div class="a" style="left:1026px;top:696px;width:171px;height:22px;background:#fff;border:1px solid #ababab;box-sizing:border-box"></div>
<div class="a" style="left:1179px;top:698px;width:16px;height:18px;box-sizing:border-box;border:1px solid #a0a0a0;background:linear-gradient(#f3f3f3,#e3e3e3)"><svg style="position:absolute;left:3px;top:5px" width="10" height="7" viewBox="0 0 10 7"><path d="M1 1L4.8 5L8.6 1" fill="none" stroke="#555" stroke-width="1.5"/></svg></div>
<div class="a t" style="left:1031px;top:700.76px;font-size:12.4px;line-height:14.88px;color:#303030;font-family:'Liberation Sans',sans-serif;transform:scaleX(0.925);transform-origin:left center;white-space:nowrap;">Wochen</div>
<div class="a t" style="left:1202px;top:677.84px;font-size:12px;line-height:14.4px;color:#8a8a8a;font-family:'Liberation Sans',sans-serif;white-space:nowrap;">Preis</div>
<div class="a" style="left:1202px;top:696px;width:172px;height:22px;background:#fff;border:1px solid #ababab;box-sizing:border-box"></div>
<div class="a t" style="left:769px;width:600px;text-align:right;top:700.76px;font-size:12.4px;line-height:14.88px;color:#303030;font-family:'Liberation Sans',sans-serif;transform:scaleX(0.925);transform-origin:right center;">1.273,00</div>
<div class="a t" style="left:1379px;top:677.84px;font-size:12px;line-height:14.4px;color:#8a8a8a;font-family:'Liberation Sans',sans-serif;white-space:nowrap;">Preiseinheit</div>
<div class="a" style="left:1379px;top:696px;width:171px;height:22px;background:#fff;border:1px solid #ababab;box-sizing:border-box"></div>
<div class="a t" style="left:945px;width:600px;text-align:right;top:700.76px;font-size:12.4px;line-height:14.88px;color:#303030;font-family:'Liberation Sans',sans-serif;transform:scaleX(0.925);transform-origin:right center;">1,000</div>
<div class="a t" style="left:1555px;top:677.84px;font-size:12px;line-height:14.4px;color:#8a8a8a;font-family:'Liberation Sans',sans-serif;white-space:nowrap;">Summe Position</div>
<div class="a" style="left:1555px;top:696px;width:171px;height:22px;background:#fff;border:1px solid #ababab;box-sizing:border-box"></div>
<div class="a t" style="left:1121px;width:600px;text-align:right;top:700.76px;font-size:12.4px;line-height:14.88px;color:#b4b4b4;font-family:'Liberation Sans',sans-serif;transform:scaleX(0.925);transform-origin:right center;">1.273,00</div>
<div class="a" style="left:838px;top:754px;width:50px;height:22px;box-sizing:border-box;border:1px solid #adadad;background:linear-gradient(#f2f2f2,#e4e4e4)"><svg style="position:absolute;left:-1px;top:-1px" width="50" height="22" viewBox="0 0 50 22"><path d="M18.5 5.5H23.5L25.5 7.5V14.5H18.5Z" fill="#fff" stroke="#6e6e6e"/><path d="M20 10.5H24M20 12.5H24" stroke="#111"/><path d="M20 7.5H22" stroke="#888"/><path d="M24.5 8.5H29.5L32.5 11.5V17.5H24.5Z" fill="#fff" stroke="#6e6e6e"/><path d="M26 11.5H29M26 13.5H31M26 15.5H31" stroke="#111"/></svg></div>
<div class="a" style="left:890px;top:754px;width:50px;height:22px;box-sizing:border-box;border:1px solid #adadad;background:linear-gradient(#f2f2f2,#e4e4e4)"><svg style="position:absolute;left:-1px;top:-1px" width="50" height="22" viewBox="0 0 50 22"><rect x="20" y="6" width="10" height="1.9" fill="#0000f0"/><path d="M25 8.8L30 14H20Z" fill="#0000f0"/></svg></div>
<div class="a" style="left:942px;top:754px;width:50px;height:22px;box-sizing:border-box;border:1px solid #adadad;background:linear-gradient(#f2f2f2,#e4e4e4)"><svg style="position:absolute;left:-1px;top:-1px" width="50" height="22" viewBox="0 0 50 22"><path d="M25 7.8L30 13H20Z" fill="#0000f0"/></svg></div>
<div class="a" style="left:994px;top:754px;width:50px;height:22px;box-sizing:border-box;border:1px solid #adadad;background:linear-gradient(#f2f2f2,#e4e4e4)"><svg style="position:absolute;left:-1px;top:-1px" width="50" height="22" viewBox="0 0 50 22"><path d="M25 13.2L30 8H20Z" fill="#0000f0"/></svg></div>
<div class="a" style="left:1046px;top:754px;width:50px;height:22px;box-sizing:border-box;border:1px solid #adadad;background:linear-gradient(#f2f2f2,#e4e4e4)"><svg style="position:absolute;left:-1px;top:-1px" width="50" height="22" viewBox="0 0 50 22"><path d="M25 12.2L30.2 7H19.8Z" fill="#0000f0"/><rect x="19.8" y="12.9" width="10.4" height="2" fill="#0000f0"/></svg></div>
<div class="a" style="left:837px;top:782px;width:1100px;height:130px;background:#fff;border:1px solid #a6a6a6;box-sizing:border-box"></div>
<div class="a" style="left:838px;top:783px;width:1100px;height:22px;background:#f5f5f5"></div>
<div class="a" style="left:837px;top:805px;width:1100px;height:1px;background:#a6a6a6"></div>
<div class="a" style="left:853px;top:783px;width:1px;height:22px;background:#c8c8c8"></div>
<div class="a" style="left:889px;top:783px;width:1px;height:22px;background:#c8c8c8"></div>
<div class="a" style="left:954px;top:783px;width:1px;height:22px;background:#c8c8c8"></div>
<div class="a" style="left:1006px;top:783px;width:1px;height:22px;background:#c8c8c8"></div>
<div class="a" style="left:1056px;top:783px;width:1px;height:22px;background:#c8c8c8"></div>
<div class="a" style="left:1205px;top:783px;width:1px;height:22px;background:#c8c8c8"></div>
<div class="a" style="left:1767px;top:783px;width:1px;height:22px;background:#c8c8c8"></div>
<div class="a" style="left:1843px;top:783px;width:1px;height:22px;background:#c8c8c8"></div>
<div class="a t" style="left:858px;top:788.16px;font-size:12.4px;line-height:14.88px;color:#333;font-family:'Liberation Sans',sans-serif;transform:scaleX(0.96);transform-origin:left center;white-space:nowrap;">Ast</div>
<div class="a t" style="left:894px;top:788.16px;font-size:12.4px;line-height:14.88px;color:#333;font-family:'Liberation Sans',sans-serif;transform:scaleX(0.96);transform-origin:left center;white-space:nowrap;">Sortierung</div>
<div class="a t" style="left:959px;top:788.16px;font-size:12.4px;line-height:14.88px;color:#333;font-family:'Liberation Sans',sans-serif;transform:scaleX(0.96);transform-origin:left center;white-space:nowrap;">Anzeige</div>
<div class="a t" style="left:1011px;top:788.16px;font-size:12.4px;line-height:14.88px;color:#333;font-family:'Liberation Sans',sans-serif;transform:scaleX(0.96);transform-origin:left center;white-space:nowrap;">Pos. Nr.</div>
<div class="a t" style="left:1061px;top:788.16px;font-size:12.4px;line-height:14.88px;color:#333;font-family:'Liberation Sans',sans-serif;transform:scaleX(0.96);transform-origin:left center;white-space:nowrap;">Belegposition</div>
<div class="a t" style="left:1210px;top:788.16px;font-size:12.4px;line-height:14.88px;color:#333;font-family:'Liberation Sans',sans-serif;transform:scaleX(0.96);transform-origin:left center;white-space:nowrap;">Positionstext</div>
<div class="a t" style="left:1772px;top:788.16px;font-size:12.4px;line-height:14.88px;color:#333;font-family:'Liberation Sans',sans-serif;transform:scaleX(0.96);transform-origin:left center;white-space:nowrap;">Vorgangsnr.</div>
<div class="a t" style="left:1848px;top:788.16px;font-size:12.4px;line-height:14.88px;color:#333;font-family:'Liberation Sans',sans-serif;transform:scaleX(0.96);transform-origin:left center;white-space:nowrap;">Vorgangstitel</div>
<div class="a" style="left:838px;top:806px;width:15px;height:104px;background:#f3f3f3"></div>
<div class="a" style="left:853px;top:806px;width:1px;height:104px;background:#a6a6a6"></div>
<div class="a" style="left:873px;top:806px;width:1016px;height:20px;background:#9bc8e8"></div>
<div class="a" style="left:1057px;top:806px;width:148px;height:20px;background:#fff"></div>
<div class="a" style="left:837px;top:826px;width:17px;height:1px;background:#a6a6a6"></div>
<div class="a" style="left:873px;top:826px;width:1016px;height:1px;background:#cfcfcf"></div>
<div class="a" style="left:837px;top:847px;width:17px;height:1px;background:#a6a6a6"></div>
<div class="a" style="left:873px;top:847px;width:1016px;height:1px;background:#cfcfcf"></div>
<div class="a" style="left:837px;top:868px;width:17px;height:1px;background:#a6a6a6"></div>
<div class="a" style="left:873px;top:868px;width:1016px;height:1px;background:#cfcfcf"></div>
<div class="a" style="left:837px;top:889px;width:17px;height:1px;background:#a6a6a6"></div>
<div class="a" style="left:873px;top:889px;width:1016px;height:1px;background:#cfcfcf"></div>
<div class="a" style="left:889px;top:806px;width:1px;height:104px;background:#cfcfcf"></div>
<div class="a" style="left:954px;top:806px;width:1px;height:104px;background:#cfcfcf"></div>
<div class="a" style="left:1006px;top:806px;width:1px;height:104px;background:#cfcfcf"></div>
<div class="a" style="left:1056px;top:806px;width:1px;height:104px;background:#cfcfcf"></div>
<div class="a" style="left:1205px;top:806px;width:1px;height:104px;background:#cfcfcf"></div>
<div class="a" style="left:1767px;top:806px;width:1px;height:104px;background:#cfcfcf"></div>
<div class="a" style="left:1843px;top:806px;width:1px;height:104px;background:#cfcfcf"></div>
<div class="a" style="left:873px;top:806px;width:1px;height:104px;background:#cfcfcf"></div>
<div class="a t" style="left:352px;width:600px;text-align:right;top:810.16px;font-size:12.4px;line-height:14.88px;color:#303030;font-family:'Liberation Sans',sans-serif;transform:scaleX(0.925);transform-origin:right center;">1</div>
<div class="a t" style="left:959px;top:810.16px;font-size:12.4px;line-height:14.88px;color:#303030;font-family:'Liberation Sans',sans-serif;transform:scaleX(0.925);transform-origin:left center;white-space:nowrap;">01</div>
<div class="a t" style="left:1011px;top:810.16px;font-size:12.4px;line-height:14.88px;color:#303030;font-family:'Liberation Sans',sans-serif;transform:scaleX(0.925);transform-origin:left center;white-space:nowrap;">01</div>
<div class="a t" style="left:1772px;top:810.16px;font-size:12.4px;line-height:14.88px;color:#303030;font-family:'Liberation Sans',sans-serif;transform:scaleX(0.925);transform-origin:left center;white-space:nowrap;">1443953</div>
<div class="a t" style="left:1848px;top:810.16px;font-size:12.4px;line-height:14.88px;color:#303030;font-family:'Liberation Sans',sans-serif;transform:scaleX(0.925);transform-origin:left center;white-space:nowrap;">TOSL108</div>
<div class="a t" style="left:352px;width:600px;text-align:right;top:831.16px;font-size:12.4px;line-height:14.88px;color:#303030;font-family:'Liberation Sans',sans-serif;transform:scaleX(0.925);transform-origin:right center;">2</div>
<div class="a t" style="left:959px;top:831.16px;font-size:12.4px;line-height:14.88px;color:#303030;font-family:'Liberation Sans',sans-serif;transform:scaleX(0.925);transform-origin:left center;white-space:nowrap;">02</div>
<div class="a t" style="left:1011px;top:831.16px;font-size:12.4px;line-height:14.88px;color:#303030;font-family:'Liberation Sans',sans-serif;transform:scaleX(0.925);transform-origin:left center;white-space:nowrap;">02</div>
<div class="a t" style="left:1772px;top:831.16px;font-size:12.4px;line-height:14.88px;color:#303030;font-family:'Liberation Sans',sans-serif;transform:scaleX(0.925);transform-origin:left center;white-space:nowrap;">1443953</div>
<div class="a t" style="left:1848px;top:831.16px;font-size:12.4px;line-height:14.88px;color:#303030;font-family:'Liberation Sans',sans-serif;transform:scaleX(0.925);transform-origin:left center;white-space:nowrap;">TOSL108</div>
<div class="a t" style="left:352px;width:600px;text-align:right;top:852.16px;font-size:12.4px;line-height:14.88px;color:#303030;font-family:'Liberation Sans',sans-serif;transform:scaleX(0.925);transform-origin:right center;">3</div>
<div class="a t" style="left:959px;top:852.16px;font-size:12.4px;line-height:14.88px;color:#303030;font-family:'Liberation Sans',sans-serif;transform:scaleX(0.925);transform-origin:left center;white-space:nowrap;">03</div>
<div class="a t" style="left:1011px;top:852.16px;font-size:12.4px;line-height:14.88px;color:#303030;font-family:'Liberation Sans',sans-serif;transform:scaleX(0.925);transform-origin:left center;white-space:nowrap;">03</div>
<div class="a t" style="left:1772px;top:852.16px;font-size:12.4px;line-height:14.88px;color:#303030;font-family:'Liberation Sans',sans-serif;transform:scaleX(0.925);transform-origin:left center;white-space:nowrap;">1443953</div>
<div class="a t" style="left:1848px;top:852.16px;font-size:12.4px;line-height:14.88px;color:#303030;font-family:'Liberation Sans',sans-serif;transform:scaleX(0.925);transform-origin:left center;white-space:nowrap;">TOSL108</div>
<div class="a t" style="left:352px;width:600px;text-align:right;top:873.16px;font-size:12.4px;line-height:14.88px;color:#303030;font-family:'Liberation Sans',sans-serif;transform:scaleX(0.925);transform-origin:right center;">4</div>
<div class="a t" style="left:959px;top:873.16px;font-size:12.4px;line-height:14.88px;color:#303030;font-family:'Liberation Sans',sans-serif;transform:scaleX(0.925);transform-origin:left center;white-space:nowrap;">04</div>
<div class="a t" style="left:1011px;top:873.16px;font-size:12.4px;line-height:14.88px;color:#303030;font-family:'Liberation Sans',sans-serif;transform:scaleX(0.925);transform-origin:left center;white-space:nowrap;">04</div>
<div class="a t" style="left:1772px;top:873.16px;font-size:12.4px;line-height:14.88px;color:#303030;font-family:'Liberation Sans',sans-serif;transform:scaleX(0.925);transform-origin:left center;white-space:nowrap;">1443953</div>
<div class="a t" style="left:1848px;top:873.16px;font-size:12.4px;line-height:14.88px;color:#303030;font-family:'Liberation Sans',sans-serif;transform:scaleX(0.925);transform-origin:left center;white-space:nowrap;">TOSL108</div>
<div class="a t" style="left:352px;width:600px;text-align:right;top:894.16px;font-size:12.4px;line-height:14.88px;color:#303030;font-family:'Liberation Sans',sans-serif;transform:scaleX(0.925);transform-origin:right center;">5</div>
<div class="a t" style="left:959px;top:894.16px;font-size:12.4px;line-height:14.88px;color:#303030;font-family:'Liberation Sans',sans-serif;transform:scaleX(0.925);transform-origin:left center;white-space:nowrap;">05</div>
<div class="a t" style="left:1011px;top:894.16px;font-size:12.4px;line-height:14.88px;color:#303030;font-family:'Liberation Sans',sans-serif;transform:scaleX(0.925);transform-origin:left center;white-space:nowrap;">05</div>
<div class="a t" style="left:1772px;top:894.16px;font-size:12.4px;line-height:14.88px;color:#303030;font-family:'Liberation Sans',sans-serif;transform:scaleX(0.925);transform-origin:left center;white-space:nowrap;">1443953</div>
<div class="a t" style="left:1848px;top:894.16px;font-size:12.4px;line-height:14.88px;color:#303030;font-family:'Liberation Sans',sans-serif;transform:scaleX(0.925);transform-origin:left center;white-space:nowrap;">TOSL108</div>
<div class="a t" style="left:1061px;top:810.16px;font-size:12.4px;line-height:14.88px;color:#303030;font-family:'Liberation Sans',sans-serif;transform:scaleX(0.925);transform-origin:left center;white-space:nowrap;">Scratch on box</div>
<div class="a t" style="left:1061px;top:831.16px;font-size:12.4px;line-height:14.88px;color:#303030;font-family:'Liberation Sans',sans-serif;transform:scaleX(0.925);transform-origin:left center;white-space:nowrap;">Cover is slightly damaged.</div>
<div class="a t" style="left:1210px;top:810.16px;font-size:12.4px;line-height:14.88px;color:#303030;font-family:'Liberation Sans',sans-serif;transform:scaleX(0.925);transform-origin:left center;white-space:nowrap;">Processor: Intel Core 2 Duo SU9400 LV (1.4GHz). RAM:</div>
<div class="a t" style="left:1161px;width:600px;text-align:right;top:810.16px;font-size:12.4px;line-height:14.88px;color:#303030;font-family:'Liberation Sans',sans-serif;transform:scaleX(0.925);transform-origin:right center;">3MB. Screen 1440x900</div>
<svg class="a" style="left:838px;top:808px" width="14" height="14" viewBox="0 0 14 14"><path d="M3 12.3L3.7 9.5L8.6 4.6L10.7 6.7L5.8 11.6Z" fill="#4a4a4a"/><path d="M9.4 3.8L10.4 2.8L12.5 4.9L11.5 5.9Z" fill="#4a4a4a"/></svg>
<div class="a" style="left:837px;top:910px;width:1100px;height:1px;background:#a6a6a6"></div>
<div class="a" style="left:808px;top:951px;width:1200px;height:28px;background:#fff;border:1px solid #d2d2d2;border-radius:3px;box-sizing:border-box;"></div>
<div class="a t" style="left:816px;top:957.94px;font-size:12px;line-height:14.4px;color:#9a9a9a;font-family:'Liberation Sans',sans-serif;white-space:nowrap;">Positionen &gt; Positionsdaten</div>
</div>
<div class="a" style="left:0px;top:988px;width:790px;height:5px;background:#2f3a40"></div>
<div class="a" style="left:790px;top:989px;width:1101px;height:4px;background:#3a3a3a"></div>
<div class="a" style="left:320px;top:988px;width:45px;height:5px;background:#4a5358"></div>
</body></html>
